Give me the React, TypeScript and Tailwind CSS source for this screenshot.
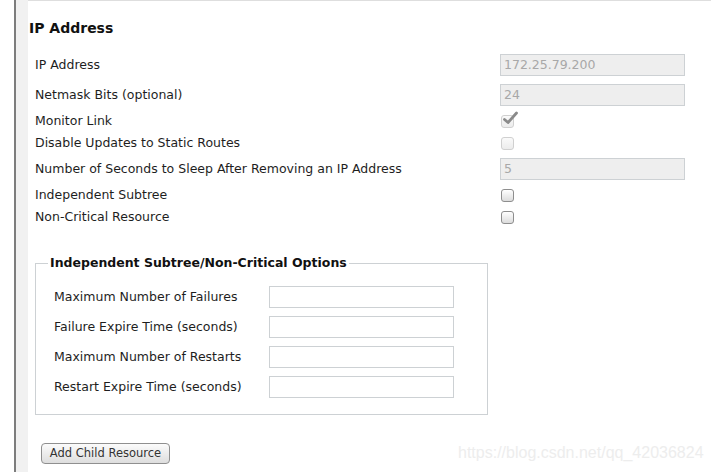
const font = { fontFamily: '"DejaVu Sans", Verdana, sans-serif' }

function TextRow({ label, value }: { label: string; value: string }) {
  return (
    <div className="flex h-[30px] items-center">
      <div className="w-[471px] pl-[6px]">{label}</div>
      <div className="flex h-[22px] w-[185px] items-center border border-[#cdd1d4] bg-[#eeeeee] pl-[3px] text-[#a8a8a8]">
        {value}
      </div>
    </div>
  )
}

function CheckRow({ label, checked, disabled }: { label: string; checked?: boolean; disabled?: boolean }) {
  return (
    <div className="flex h-[22px] items-center">
      <div className="w-[472px] pl-[6px]">{label}</div>
      <div
        className={`relative h-[13px] w-[13px] rounded-[3px] border ${
          disabled
            ? 'border-[#d0d0d0] bg-gradient-to-b from-[#fafafa] to-[#ececec]'
            : 'border-[#8e8e8e] bg-gradient-to-b from-[#ffffff] to-[#dcdcdc]'
        }`}
      >
        {checked && (
          <svg className="absolute -top-[5px] left-[1px]" width="15" height="14" viewBox="0 0 15 14">
            <path d="M1.5 8.5 L5 11.5 L13.5 2" stroke="#8a8a8a" strokeWidth="2.8" fill="none" strokeLinecap="round" strokeLinejoin="round" />
          </svg>
        )}
      </div>
    </div>
  )
}

function OptionRow({ label }: { label: string }) {
  return (
    <div className="flex h-[30px] items-center">
      <div className="w-[221px] pl-[6px]">{label}</div>
      <div className="h-[22px] w-[185px] border border-[#cdd1d4] bg-white" />
    </div>
  )
}

export default function App() {
  return (
    <div className="relative flex h-[472px] w-[711px] overflow-hidden bg-white text-[12.5px] text-[#1e1e1e]" style={font}>
      <div className="w-[14px] shrink-0 bg-white" />
      <div className="w-[2px] shrink-0 bg-[#7d7d7d]" />
      <div className="w-[12px] shrink-0 bg-[#f1f1f1]" />
      <div className="flex-1 border-t border-[#dedede] pl-[1px] pt-[15px]">
        <h2 className="h-[24px] text-[14px] leading-[24px] font-bold text-[#111]">IP Address</h2>
        <div className="mt-[10px]">
          <TextRow label="IP Address" value="172.25.79.200" />
          <TextRow label="Netmask Bits (optional)" value="24" />
          <CheckRow label="Monitor Link" checked disabled />
          <CheckRow label="Disable Updates to Static Routes" disabled />
          <TextRow label="Number of Seconds to Sleep After Removing an IP Address" value="5" />
          <CheckRow label="Independent Subtree" />
          <CheckRow label="Non-Critical Resource" />
        </div>
        <fieldset className="mt-[26px] ml-[6px] w-[453px] border border-[#cdd1d4] px-[12px] pb-[12px]">
          <legend className="px-[2px] text-[12.5px] leading-[18px] font-bold text-[#111]">
            Independent Subtree/Non-Critical Options
          </legend>
          <div className="mt-[10px]">
            <OptionRow label="Maximum Number of Failures" />
            <OptionRow label="Failure Expire Time (seconds)" />
            <OptionRow label="Maximum Number of Restarts" />
            <OptionRow label="Restart Expire Time (seconds)" />
          </div>
        </fieldset>
        <button className="mt-[28px] ml-[12px] flex h-[21px] w-[129px] items-center justify-center rounded-[4px] border border-[#8f8f8f] bg-gradient-to-b from-[#fbfbfb] to-[#dedede] text-[11.5px] text-[#333]">
          Add Child Resource
        </button>
      </div>
      <div
        className="absolute top-[442px] left-[458px] text-[16px] leading-[22px] text-[#ededed]"
        style={{ fontFamily: '"Liberation Sans", Arial, sans-serif' }}
      >
        https://blog.csdn.net/qq_42036824
      </div>
    </div>
  )
}
